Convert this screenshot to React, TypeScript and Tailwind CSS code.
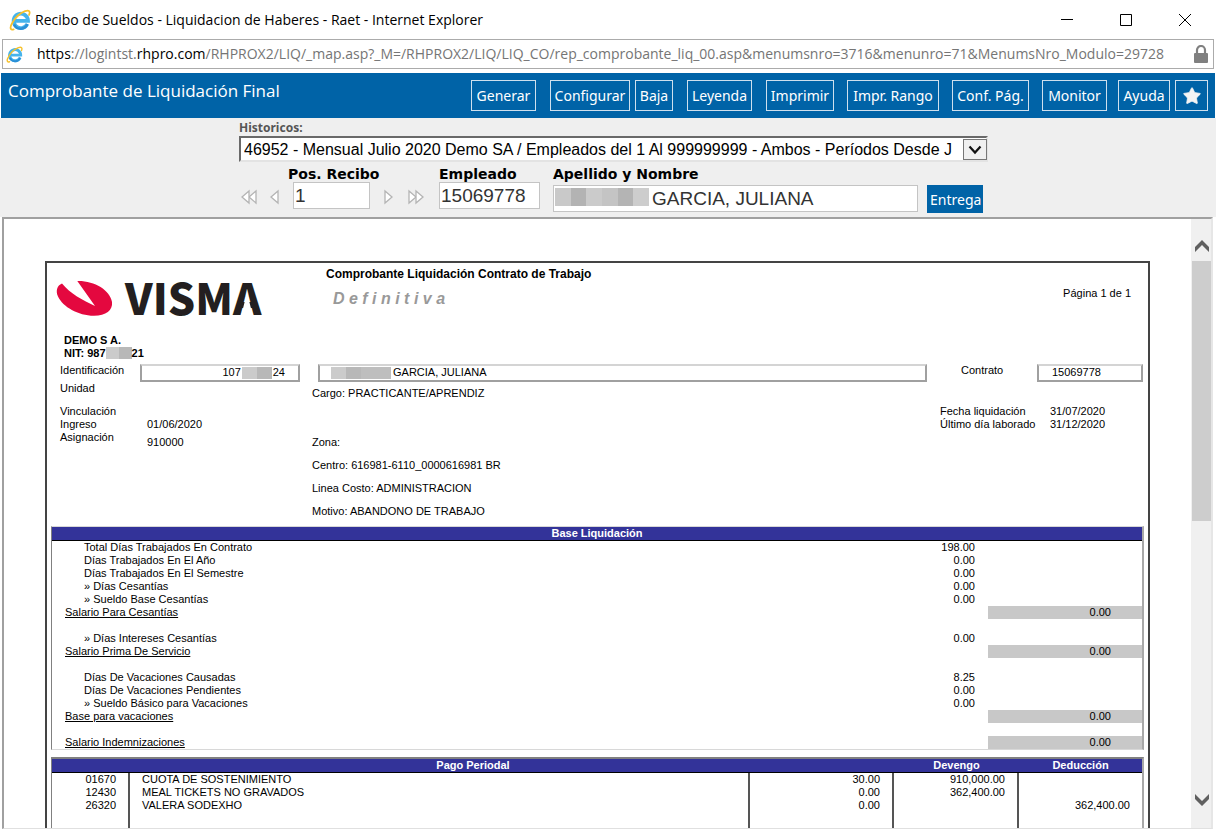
import type { ReactNode } from "react";
import { Star } from "lucide-react";

const actions = [
  { label: "Generar", className: "w-[65px]" },
  { label: "Configurar", className: "ml-[14px] w-[80px]" },
  { label: "Baja", className: "ml-[5px] w-[38px]" },
  { label: "Leyenda", className: "ml-[14px] w-[65px]" },
  { label: "Imprimir", className: "ml-[14px] w-[68px]" },
  { label: "Impr. Rango", className: "ml-[13px] w-[92px]" },
  { label: "Conf. Pág.", className: "ml-[13px] w-[77px]" },
  { label: "Monitor", className: "ml-[13px] w-[65px]" },
  { label: "Ayuda", className: "ml-[11px] w-[52px]" }
];

type BaseRow = { label?: string; value?: string; total?: string };

const baseRows: BaseRow[] = [
  { label: "Total Días Trabajados En Contrato", value: "198.00" },
  { label: "Días Trabajados En El Año", value: "0.00" },
  { label: "Días Trabajados En El Semestre", value: "0.00" },
  { label: "» Días Cesantías", value: "0.00" },
  { label: "» Sueldo Base Cesantías", value: "0.00" },
  { label: "Salario Para Cesantías", total: "0.00" },
  {},
  { label: "» Días Intereses Cesantías", value: "0.00" },
  { label: "Salario Prima De Servicio", total: "0.00" },
  {},
  { label: "Días De Vacaciones Causadas", value: "8.25" },
  { label: "Días De Vacaciones Pendientes", value: "0.00" },
  { label: "» Sueldo Básico para Vacaciones", value: "0.00" },
  { label: "Base para vacaciones", total: "0.00" },
  {},
  { label: "Salario Indemnizaciones", total: "0.00" }
];

const payRows = [
  ["01670", "CUOTA DE SOSTENIMIENTO", "30.00", "910,000.00", ""],
  ["12430", "MEAL TICKETS NO GRAVADOS", "0.00", "362,400.00", ""],
  ["26320", "VALERA SODEXHO", "0.00", "", "362,400.00"],
  ["", "", "", "", ""],
  ["", "", "", "", ""],
  ["", "", "", "", ""]
];

function ExplorerIcon({ className }: { className: string }) {
  return (
    <svg viewBox="0 0 22 22" className={className} aria-hidden="true">
      <path d="M18.300 15A7.200 7.200 0 1 1 19 11.800H6.500" fill="none" stroke="#45b4ec" strokeWidth="3.800" />
      <path d="M5 15.500A7.200 7.200 0 0 0 18.300 15" fill="none" stroke="#2a8fd6" strokeWidth="2.400" />
      <path
        d="M4.600 20.400C1.200 21.600 .6 18.400 3.200 14C6 9 11.400 4 16 2.200C20 .6 21.600 2.400 20 6"
        fill="none"
        stroke="#f6c12c"
        strokeWidth="1.800"
        strokeLinecap="round"
      />
    </svg>
  );
}

function VismaLogo() {
  return (
    <svg viewBox="0 0 204 42" className="h-[42px] w-[204px] overflow-visible" role="img" aria-label="Visma">
      <path
        d="M6 4.500C1 6.500 -.5 12 2 17.500C7 28 22 36.500 38 36.800C50 36.800 57 31 56 23C54 11 38 1.500 21.300 2L39 27C27 21.500 14 14.500 6 4.500Z"
        fill="#e4083f"
      />
      <text x="69" y="36" fontFamily="'Noto Sans CJK SC', 'Liberation Sans', sans-serif" fontWeight="900" fontSize="43" fill="#231f20">
        VISMA
      </text>
      {/* opens the last letter, which has no crossbar in the logo */}
      <path d="M191 14L197 37H185Z" fill="#fff" />
    </svg>
  );
}

function NavArrow({ label, flip, double }: { label: string; flip?: boolean; double?: boolean }) {
  return (
    <button type="button" aria-label={label} className="flex h-4 items-center">
      <svg
        viewBox={double ? "0 0 16 16" : "0 0 10 16"}
        className={`h-4 ${double ? "w-4" : "w-[10px]"} ${flip ? "-scale-x-100" : ""}`}
        fill="#fff"
        stroke="#b4b4b4"
        strokeWidth="1.300"
      >
        <path d="M1 2L8 8L1 14Z" />
        {double && <path d="M8 2L15 8L8 14Z" />}
      </svg>
    </button>
  );
}

function Mask({ className, tones }: { className: string; tones: string[] }) {
  return (
    <span className={`flex ${className}`} aria-hidden="true">
      {tones.map((tone, i) => (
        <span key={i} className={`flex-1 ${tone}`} />
      ))}
    </span>
  );
}

function Box({ children, className = "" }: { children: ReactNode; className?: string }) {
  return (
    <div className={`flex h-[18px] items-center border-2 border-[#a0a0a0] border-t-[#d4d4d4] pb-px ${className}`}>
      {children}
    </div>
  );
}

function TitleBar() {
  return (
    <header className="flex h-[39px] shrink-0 items-center pl-[9px] font-['Open_Sans','Noto_Sans',sans-serif]">
      <ExplorerIcon className="size-[22px]" />
      <h1 className="ml-1 text-[14px] text-black">Recibo de Sueldos - Liquidacion de Haberes - Raet - Internet Explorer</h1>
      <div className="ml-auto flex items-center gap-[47px] pr-[25px] text-black">
        <button type="button" aria-label="Minimizar">
          <svg viewBox="0 0 12 12" className="size-3" stroke="currentColor"><path d="M0 5.500H12" /></svg>
        </button>
        <button type="button" aria-label="Maximizar">
          <svg viewBox="0 0 12 12" className="size-3" fill="none" stroke="currentColor"><path d="M.5 .5H11.500V11.500H.5Z" /></svg>
        </button>
        <button type="button" aria-label="Cerrar">
          <svg viewBox="0 0 12 12" className="size-3" stroke="currentColor"><path d="M0 0L12 12M12 0L0 12" /></svg>
        </button>
      </div>
    </header>
  );
}

function AddressBar() {
  return (
    <div className="mx-[2px] flex h-[30px] shrink-0 items-center border border-[#ababab] pr-1 pl-[3px] font-['Open_Sans','Noto_Sans',sans-serif]">
      <ExplorerIcon className="size-[17px] shrink-0" />
      <p className="ml-[14px] min-w-0 flex-1 overflow-hidden text-[14px] leading-6 whitespace-nowrap text-[#757575]">
        <span className="text-black">https</span>://logintst.<span className="text-black">rhpro.com</span>
        /RHPROX2/LIQ/_map.asp?_M=/RHPROX2/LIQ/LIQ_CO/rep_comprobante_liq_00.asp&amp;menumsnro=3716&amp;menunro=71&amp;MenumsNro_Modulo=29728
      </p>
      <svg viewBox="0 0 16 18" className="ml-2 h-[18px] w-4 shrink-0" aria-hidden="true">
        <path d="M4 9V5A4 4 0 0 1 12 5V9" fill="none" stroke="#808080" strokeWidth="2.200" />
        <rect x="1" y="8" width="14" height="10" rx="1" fill="#808080" />
      </svg>
    </div>
  );
}

function Toolbar() {
  return (
    <div className="mx-px mt-1 flex h-[45px] shrink-0 bg-[#0063a7] pr-[7px] pl-[7px] text-white">
      <h2 className="pt-1 font-['Open_Sans','Noto_Sans',sans-serif] text-[17px] leading-7">Comprobante de Liquidación Final</h2>
      <nav className="ml-auto flex pt-[7px] font-['Noto_Sans','Open_Sans',sans-serif]">
        {actions.map((action) => (
          <button
            key={action.label}
            type="button"
            className={`h-[31px] border border-[#cfe0ee] text-center text-[14px] whitespace-nowrap ${action.className}`}
          >
            {action.label}
          </button>
        ))}
        <button
          type="button"
          aria-label="Favoritos"
          className="ml-[5px] flex h-[31px] w-[33px] items-center justify-center border border-[#cfe0ee]"
        >
          <Star className="size-5" fill="#f4f4f4" stroke="#f4f4f4" strokeWidth={1} />
        </button>
      </nav>
    </div>
  );
}

function Filters() {
  const label = "block text-[14px] leading-4 font-bold text-black";
  const input = "border border-[#c4c4c4] bg-white pl-px text-[19px] leading-5 text-[#333] font-['Liberation_Sans',Arial,sans-serif]";
  return (
    <form className="h-[99px] shrink-0 bg-[#efefef] pt-[2px] pl-[239px] font-['DejaVu_Sans',Verdana,sans-serif]">
      <label htmlFor="historicos" className="block font-['Noto_Sans',sans-serif] text-[12px] leading-4 font-bold text-[#555]">
        Historicos:
      </label>
      <div className="relative w-[749px]">
        <select
          id="historicos"
          className="block h-[26px] w-full appearance-none border-2 border-[#e3e3e3] border-t-[#696969] border-l-[#696969] bg-white pt-px pr-6 pl-[3px] font-['Liberation_Sans',Arial,sans-serif] text-[16px] leading-5 text-black"
        >
          <option>46952 - Mensual Julio 2020 Demo SA / Empleados del 1 Al 999999999 - Ambos - Períodos Desde J</option>
        </select>
        <span className="pointer-events-none absolute top-[3px] right-px flex h-[21px] w-6 items-center justify-center border border-[#777] bg-[#f0f0f0]">
          <svg viewBox="0 0 14 10" className="h-[10px] w-[14px]" fill="none" stroke="#111" strokeWidth="2.200">
            <path d="M1.500 1.500L7 7.500L12.500 1.500" />
          </svg>
        </span>
      </div>
      <div className="mt-1 flex items-start">
        <div className="mt-[23px] flex w-[49px] items-center gap-3 pl-[2px]">
          <NavArrow label="Primero" flip double />
          <NavArrow label="Anterior" flip />
        </div>
        <div className="w-[90px]">
          <label htmlFor="posicion" className={`${label} whitespace-nowrap`}>Pos. Recibo</label>
          <input id="posicion" defaultValue="1" className={`ml-[5px] h-[27px] w-[77px] ${input}`} />
        </div>
        <div className="mt-[23px] ml-[6px] flex items-center gap-[14px]">
          <NavArrow label="Siguiente" />
          <NavArrow label="Último" double />
        </div>
        <div className="ml-[15px] w-[114px]">
          <label htmlFor="empleado" className={label}>Empleado</label>
          <input id="empleado" defaultValue="15069778" className={`h-[27px] w-[101px] ${input}`} />
        </div>
        <div className="relative w-[365px]">
          <label htmlFor="nombre" className={label}>Apellido y Nombre</label>
          <input
            id="nombre"
            defaultValue="GARCIA, JULIANA"
            className="mt-[3px] h-[27px] w-full border border-[#c4c4c4] bg-white pl-[98px] font-['Liberation_Sans',Arial,sans-serif] text-[19px] leading-5 text-[#333]"
          />
          <Mask
            className="absolute top-[22px] left-[2px] h-[18px] w-[94px]"
            tones={["bg-[#c9c9c9]", "bg-[#b3b3b3]", "bg-[#cbcbcb]", "bg-[#c4c4c4]", "bg-[#b4b4b4]", "bg-[#cdcdcd]"]}
          />
        </div>
        <button
          type="button"
          className="mt-[19px] ml-[9px] h-[28px] w-[56px] overflow-hidden bg-[#0063a7] pl-[3px] text-left font-['Noto_Sans','Open_Sans',sans-serif] text-[14px] text-white"
        >
          Entrega
        </button>
      </div>
    </form>
  );
}

function ReportHeader() {
  return (
    <>
      <div className="flex h-[71px] items-start pr-[17px]">
        <div className="w-[279px] pt-4 pl-[9px]">
          <VismaLogo />
        </div>
        <div className="pt-1">
          <h3 className="text-[12px] leading-[14px] font-bold">Comprobante Liquidación Contrato de Trabajo</h3>
          <p className="mt-2 pl-[7px] text-[16px] leading-5 font-bold text-[#999] italic">D e f i n i t i v a</p>
        </div>
        <p className="ml-auto pt-6">Página 1 de 1</p>
      </div>
      <div className="pl-[17px] font-bold">
        <p>DEMO S A.</p>
        <p className="flex">
          NIT: 987
          <Mask className="h-3 w-[26px]" tones={["bg-[#cbcbcb]", "bg-[#b8b8b8]"]} />
          21
        </p>
      </div>
      <div className="mt-1 grid grid-cols-[93px_160px_18px_1fr_110px_106px] pr-[5px]">
        <p className="pl-[13px]">Identificación</p>
        <Box className="justify-end pr-[13px]">
          107
          <Mask className="mx-px h-3 w-[30px]" tones={["bg-[#cbcbcb]", "bg-[#b8b8b8]"]} />
          24
        </Box>
        <span />
        <Box className="pl-[11px]">
          <Mask className="mr-[2px] h-3 w-[60px]" tones={["bg-[#cbcbcb]", "bg-[#b8b8b8]", "bg-[#bebebe]", "bg-[#bebebe]"]} />
          GARCIA, JULIANA
        </Box>
        <p className="pl-[34px]">Contrato</p>
        <Box className="pl-[13px]">15069778</Box>
      </div>
      <div className="grid grid-cols-[100px_165px_1fr_110px_98px]">
        <div className="pl-[13px]">
          <p>Unidad</p>
          <p className="mt-[10px]">Vinculación</p>
          <p>Ingreso</p>
          <p>Asignación</p>
        </div>
        <div className="pt-9">
          <p>01/06/2020</p>
          <p className="mt-[5px]">910000</p>
        </div>
        <div className="pt-[5px]">
          <p>Cargo: PRACTICANTE/APRENDIZ</p>
          <p className="mt-9">Zona:</p>
          <p className="mt-[10px]">Centro: 616981-6110_0000616981 BR</p>
          <p className="mt-[10px]">Linea Costo: ADMINISTRACION</p>
          <p className="mt-[10px]">Motivo: ABANDONO DE TRABAJO</p>
        </div>
        <div className="pt-[23px] whitespace-nowrap">
          <p>Fecha liquidación</p>
          <p>Último día laborado</p>
        </div>
        <div className="pt-[23px]">
          <p>31/07/2020</p>
          <p>31/12/2020</p>
        </div>
      </div>
    </>
  );
}

function BaseTable() {
  return (
    <div className="mt-2 border border-[#d8d8d8] border-r-2 border-r-[#a8a8a8] border-l-[#808080]">
      <table className="w-full table-fixed border-separate border-spacing-0">
        <colgroup>
          <col />
          <col className="w-[120px]" />
          <col className="w-[154px]" />
        </colgroup>
        <thead>
          <tr className="h-[14px] bg-[#333399] text-white">
            <th colSpan={3} className="border-b border-black p-0 font-bold">Base Liquidación</th>
          </tr>
        </thead>
        <tbody>
          {baseRows.map((row, i) => (
            <tr key={i} className="h-[13px]">
              <td className={`p-0 ${row.total ? "pl-[13px] underline" : "pl-8"}`}>{row.label}</td>
              <td className="p-0 pr-[13px] text-right">{row.value}</td>
              <td className={`p-0 pr-[31px] text-right ${row.total ? "bg-[#c8c8c8]" : ""}`}>{row.total}</td>
            </tr>
          ))}
        </tbody>
      </table>
    </div>
  );
}

function PayTable() {
  return (
    <div className="mt-[7px] border-t-2 border-r-2 border-l border-[#808080] border-r-[#a8a8a8]">
      <table className="w-full table-fixed border-separate border-spacing-0">
        <colgroup>
          <col className="w-[78px]" />
          <col />
          <col className="w-[144px]" />
          <col className="w-[125px]" />
          <col className="w-[123px]" />
        </colgroup>
        <thead>
          <tr className="h-[14px] bg-[#333399] text-white">
            <th colSpan={3} className="border-b border-black p-0 font-bold">Pago Periodal</th>
            <th className="border-b border-black p-0 font-bold">Devengo</th>
            <th className="border-b border-black p-0 font-bold">Deducción</th>
          </tr>
        </thead>
        <tbody>
          {payRows.map(([code, concept, quantity, accrued, deducted], i) => (
            <tr key={i} className="h-[13px]">
              <td className="border-r-2 border-[#555] p-0 pr-3 text-right">{code}</td>
              <td className="border-r-2 border-[#555] p-0 pl-3">{concept}</td>
              <td className="border-r-2 border-[#555] p-0 pr-3 text-right">{quantity}</td>
              <td className="border-r-2 border-[#555] p-0 pr-3 text-right">{accrued}</td>
              <td className="p-0 pr-3 text-right">{deducted}</td>
            </tr>
          ))}
        </tbody>
      </table>
    </div>
  );
}

function Scrollbar() {
  return (
    <div className="flex w-5 shrink-0 flex-col bg-[#f0f0f0] pl-px">
      <button type="button" aria-label="Subir" className="flex h-[42px] items-end justify-center pb-[9px]">
        <svg viewBox="0 0 14 12" className="h-3 w-[14px]" fill="#606060"><path d="M7 0L14 7V12L7 5L0 12V7Z" /></svg>
      </button>
      <div className="h-[260px] bg-[#cdcdcd]" />
      <button type="button" aria-label="Bajar" className="mt-auto flex h-[34px] items-start justify-center">
        <svg viewBox="0 0 14 12" className="h-3 w-[14px]" fill="#606060"><path d="M7 12L14 5V0L7 7L0 0V5Z" /></svg>
      </button>
    </div>
  );
}

export default function App() {
  return (
    <div className="flex h-screen flex-col overflow-hidden bg-white">
      <TitleBar />
      <AddressBar />
      <Toolbar />
      <Filters />
      <main className="mr-[3px] mb-[3px] ml-[2px] flex min-h-0 flex-1 overflow-hidden border-2 border-b border-[#a0a0a0] border-r-[#e6e6e6] border-b-[#e0e0e0]">
        <div className="min-w-0 flex-1 overflow-hidden pt-[42px] pr-[41px] pl-[41px] font-['Liberation_Sans',Arial,sans-serif] text-[11px] leading-[13px] text-black">
          <article className="border-2 border-[#444]">
            <ReportHeader />
            <div className="px-1 pb-6">
              <BaseTable />
              <PayTable />
            </div>
          </article>
        </div>
        <Scrollbar />
      </main>
    </div>
  );
}
